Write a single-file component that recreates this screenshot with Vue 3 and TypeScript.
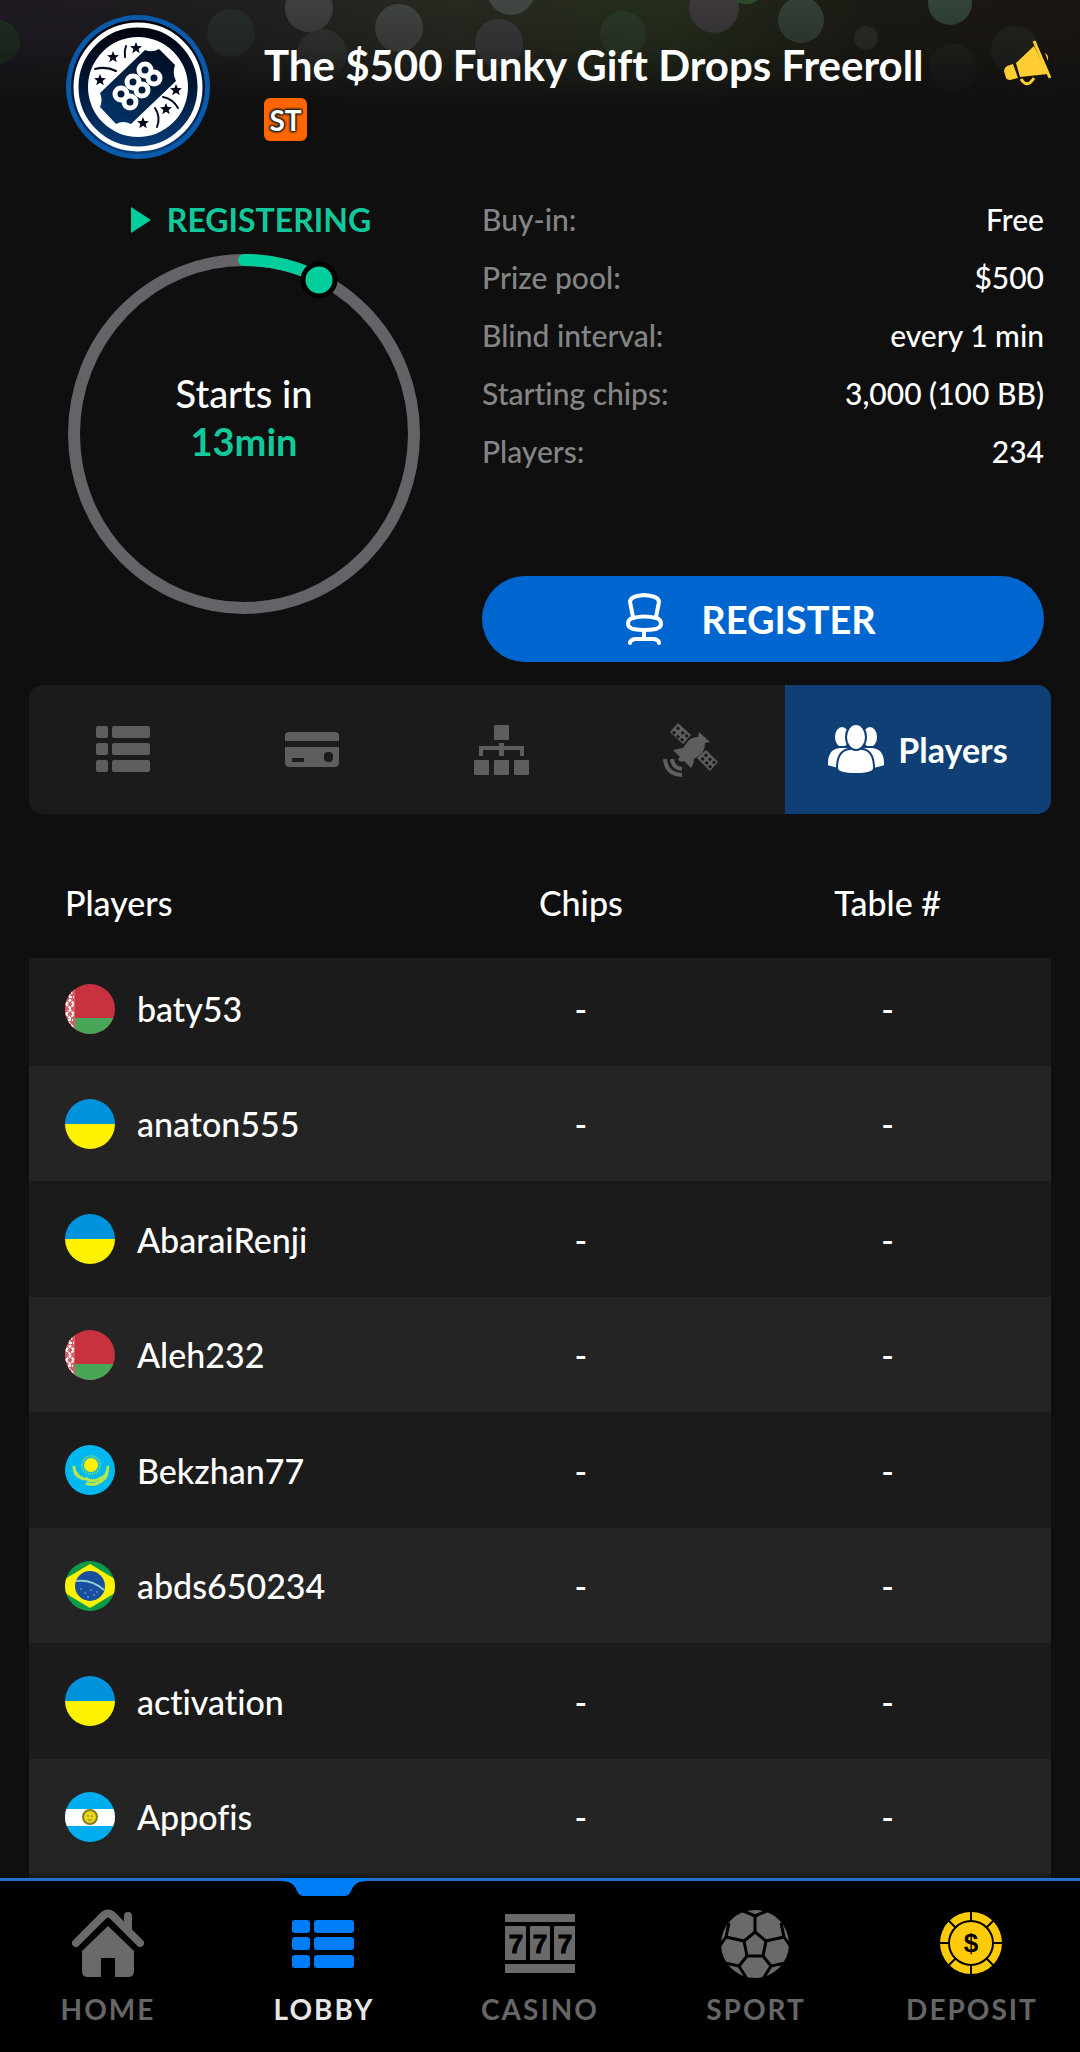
<script setup lang="ts">
import { ref } from 'vue'

type Flag = 'by' | 'ua' | 'kz' | 'br' | 'ar'

interface Player {
  name: string
  flag: Flag
  chips: string
  table: string
}

interface Detail {
  label: string
  value: string
}

const details: Detail[] = [
  { label: 'Buy-in:', value: 'Free' },
  { label: 'Prize pool:', value: '$500' },
  { label: 'Blind interval:', value: 'every 1 min' },
  { label: 'Starting chips:', value: '3,000 (100 BB)' },
  { label: 'Players:', value: '234' },
]

const players: Player[] = [
  { name: 'baty53', flag: 'by', chips: '-', table: '-' },
  { name: 'anaton555', flag: 'ua', chips: '-', table: '-' },
  { name: 'AbaraiRenji', flag: 'ua', chips: '-', table: '-' },
  { name: 'Aleh232', flag: 'by', chips: '-', table: '-' },
  { name: 'Bekzhan77', flag: 'kz', chips: '-', table: '-' },
  { name: 'abds650234', flag: 'br', chips: '-', table: '-' },
  { name: 'activation', flag: 'ua', chips: '-', table: '-' },
  { name: 'Appofis', flag: 'ar', chips: '-', table: '-' },
]

const tabs = ['Summary', 'Payouts', 'Structure', 'Satellites', 'Players']
const activeTab = ref('Players')

const navItems = ['HOME', 'LOBBY', 'CASINO', 'SPORT', 'DEPOSIT']
const activeNav = ref('LOBBY')

const bokeh = [
  { x: -2, y: 42, r: 22, c: '#1f3320', o: 0.8 },
  { x: 231, y: 33, r: 24, c: '#29342c', o: 0.7 },
  { x: 309, y: 8, r: 24, c: '#424244', o: 0.9 },
  { x: 322, y: 54, r: 25, c: '#343834', o: 0.8 },
  { x: 399, y: 28, r: 24, c: '#444844', o: 0.9 },
  { x: 499, y: 43, r: 24, c: '#3e4044', o: 0.8 },
  { x: 511, y: -9, r: 24, c: '#454a46', o: 0.9 },
  { x: 623, y: 34, r: 23, c: '#2c3c2c', o: 0.8 },
  { x: 714, y: 8, r: 25, c: '#403b40', o: 0.9 },
  { x: 746, y: -16, r: 20, c: '#2c5030', o: 0.9 },
  { x: 801, y: 20, r: 23, c: '#36433a', o: 0.9 },
  { x: 866, y: 38, r: 12, c: '#343a34', o: 0.6 },
  { x: 950, y: 3, r: 22, c: '#36493e', o: 0.9 },
  { x: 1015, y: 50, r: 24, c: '#2a302a', o: 0.5 },
  { x: 953, y: 68, r: 24, c: '#242a23', o: 0.5 },
]

const eights = [
  [55, 79], [64, 87], [67, 67], [76, 75], [79, 55], [88, 63],
]

const stars = [
  [70, 33], [47, 42], [34, 65], [110, 75], [100, 94], [77, 108],
]

const starPath =
  'M0-6 1.6-2 6-1.8 2.6 1 3.8 5.2 0 2.8-3.8 5.2-2.6 1-6-1.8-1.6-2Z'
</script>

<template>
  <div class="app">
    <svg class="backdrop" viewBox="0 0 1080 120" preserveAspectRatio="xMidYMin slice" aria-hidden="true">
      <defs>
        <linearGradient id="bdBase" x1="0" x2="1" y1="0" y2="0">
          <stop offset="0" stop-color="#1e1922" />
          <stop offset="0.2" stop-color="#201e1e" />
          <stop offset="0.4" stop-color="#282821" />
          <stop offset="0.62" stop-color="#252e1c" />
          <stop offset="0.8" stop-color="#1b1913" />
          <stop offset="1" stop-color="#1a1612" />
        </linearGradient>
        <linearGradient id="bdFade" x1="0" x2="0" y1="0" y2="1">
          <stop offset="0" stop-color="#0f0f0f" stop-opacity="0" />
          <stop offset="0.4" stop-color="#0f0f0f" stop-opacity="0.25" />
          <stop offset="0.9" stop-color="#0f0f0f" stop-opacity="1" />
        </linearGradient>
      </defs>
      <rect width="1080" height="120" fill="url(#bdBase)" />
      <circle v-for="(b, i) in bokeh" :key="i" :cx="b.x" :cy="b.y" :r="b.r" :fill="b.c" :opacity="b.o" />
      <rect width="1080" height="120" fill="url(#bdFade)" />
    </svg>

    <header class="header">
      <svg class="logo" viewBox="0 0 144 144" role="img" aria-label="Freeroll ticket">
        <defs>
          <linearGradient id="lgNavy" x1="0" x2="0" y1="0" y2="1">
            <stop offset="0" stop-color="#000208" />
            <stop offset="0.5" stop-color="#001636" />
            <stop offset="1" stop-color="#0a4180" />
          </linearGradient>
          <linearGradient id="lgTicket" x1="0.8" x2="0.2" y1="0" y2="1">
            <stop offset="0" stop-color="#000d22" />
            <stop offset="1" stop-color="#023468" />
          </linearGradient>
        </defs>
        <circle cx="72" cy="72" r="72" fill="#0a5aab" />
        <circle cx="72" cy="72" r="67" fill="url(#lgNavy)" />
        <circle cx="72" cy="72" r="62" fill="none" stroke="#fff" stroke-width="5" />
        <circle cx="72" cy="72" r="50" fill="#fff" />
        <path d="M34 78 79 35Q86 38 93 34L109 50Q106 58 110 66L65 109Q57 105 50 109L34 92Q37 85 34 78Z" fill="url(#lgTicket)" />
        <g v-for="(e, i) in eights" :key="i">
          <circle :cx="e[0]" :cy="e[1]" r="6" fill="#001a3a" stroke="#fff" stroke-width="5" />
        </g>
        <path v-for="(s, i) in stars" :key="'s' + i" :d="starPath" :transform="`translate(${s[0]} ${s[1]})`" fill="#000a1a" />
        <g fill="none" stroke="#000a1a" stroke-width="2" stroke-linecap="round">
          <path d="M60 31Q58 36 59 42M29 54Q40 51 50 56M89 93Q95 102 91 112M97 82Q107 84 112 93" />
        </g>
      </svg>
      <div class="heading">
        <h1>The $500 Funky Gift Drops Freeroll</h1>
        <span class="badge">ST</span>
      </div>
      <button class="announce" type="button" aria-label="Announcements">
        <svg viewBox="0 0 48 46">
          <g fill="#ffce32">
            <path d="M31 6 13 23 17 37 45 34Z" />
            <path d="M4 26 10 24 15 38 7 40Q4 40 3 38L1 31Q1 28 4 26Z" />
            <path d="M42 13Q46 15 45 21Z" />
          </g>
          <path d="M31 1 47 38M18 39Q24 49 31 38" fill="none" stroke="#ffce32" stroke-width="3" />
        </svg>
      </button>
    </header>

    <section class="overview">
      <div class="countdown">
        <div class="status">
          <svg viewBox="0 0 20 26" aria-hidden="true"><path d="M0 0 20 13 0 26Z" fill="#00cf9d" /></svg>
          <span>REGISTERING</span>
        </div>
        <div class="ring">
          <svg viewBox="0 0 352 362" aria-hidden="true">
            <ellipse cx="176" cy="181" rx="170" ry="174" fill="none" stroke="#656368" stroke-width="12" />
            <path d="M176 7A170 174 0 0 1 246 22" fill="none" stroke="#00cf9d" stroke-width="12" stroke-linecap="round" />
            <circle cx="251" cy="27" r="16" fill="#00cf9d" stroke="#000" stroke-width="5" />
          </svg>
          <div class="ring-text">
            <span>Starts in</span>
            <strong>13min</strong>
          </div>
        </div>
      </div>

      <div class="summary">
        <dl>
          <div v-for="d in details" :key="d.label" class="detail">
            <dt>{{ d.label }}</dt>
            <dd>{{ d.value }}</dd>
          </div>
        </dl>
        <button class="register" type="button">
          <svg viewBox="0 0 37 52" fill="none" stroke="#fff" stroke-width="4" stroke-linecap="round" stroke-linejoin="round" aria-hidden="true">
            <path d="M7 24 4 9Q4 3 18 2 33 3 33 9L30 24" />
            <path d="M7 25Q18 22 30 25 35 26 35 31 35 34 30 36 18 38 7 36 2 34 2 31 2 26 7 25Z" />
            <path d="M18 38V46M4 50Q4 47 9 46H28Q33 47 33 50" />
          </svg>
          <span>REGISTER</span>
        </button>
      </div>
    </section>

    <div class="tabs" role="tablist">
      <button
        v-for="t in tabs"
        :key="t"
        class="tab"
        :class="{ active: activeTab === t }"
        type="button"
        role="tab"
        :aria-label="t"
        :aria-selected="activeTab === t"
        @click="activeTab = t"
      >
        <svg v-if="t === 'Summary'" viewBox="0 0 56 54" fill="#5e5e5e">
          <g v-for="y in [3, 20, 37]" :key="y">
            <rect x="0" :y="y" width="12" height="12" rx="2" />
            <rect x="16" :y="y" width="38" height="12" rx="2" />
          </g>
        </svg>
        <svg v-else-if="t === 'Payouts'" viewBox="0 0 56 54">
          <path d="M0 18V13Q0 9 4 9H50Q54 9 54 13V18Z" fill="#5e5e5e" />
          <path d="M0 24H54V39Q54 44 50 44H4Q0 44 0 39Z" fill="#5e5e5e" />
          <rect x="7" y="35" width="12" height="4" fill="#1b1b1b" />
          <rect x="39" y="29" width="9" height="10" rx="4" fill="#1b1b1b" />
        </svg>
        <svg v-else-if="t === 'Structure'" viewBox="0 0 56 54" fill="#5e5e5e">
          <rect x="20" y="2" width="15" height="15" rx="1" />
          <path d="M25 20H30V23H50V33H46V27H30V33H25V27H9V33H5V23H25Z" />
          <rect x="0" y="37" width="15" height="15" rx="1" />
          <rect x="20" y="37" width="15" height="15" rx="1" />
          <rect x="40" y="37" width="15" height="15" rx="1" />
        </svg>
        <svg v-else-if="t === 'Satellites'" viewBox="0 0 56 54">
          <g fill="#5e5e5e">
            <path d="M15 0 28 12 20 21 7 9Z" />
            <path d="M43 27 55 39 47 48 34 35Z" />
            <path d="M36 9 47 19 42 20Q42 28 37 32L31 36Q31 41 28 45L21 38Q17 40 15 36L17 34 10 27Q14 26 20 25L25 18Q29 14 35 14Z" />
          </g>
          <g fill="#1b1b1b">
            <rect x="13" y="4" width="3" height="3" transform="rotate(43 15 6)" />
            <rect x="18" y="8" width="3" height="3" transform="rotate(43 19 10)" />
            <rect x="22" y="11" width="3" height="3" transform="rotate(43 23 13)" />
            <rect x="10" y="8" width="3" height="3" transform="rotate(43 11 9)" />
            <rect x="14" y="12" width="3" height="3" transform="rotate(43 15 13)" />
            <rect x="18" y="15" width="3" height="3" transform="rotate(43 19 16)" />
            <rect x="41" y="31" width="3" height="3" transform="rotate(43 43 33)" />
            <rect x="45" y="35" width="3" height="3" transform="rotate(43 47 37)" />
            <rect x="49" y="38" width="3" height="3" transform="rotate(43 51 40)" />
            <rect x="38" y="34" width="3" height="3" transform="rotate(43 39 36)" />
            <rect x="42" y="38" width="3" height="3" transform="rotate(43 43 40)" />
            <rect x="46" y="42" width="3" height="3" transform="rotate(43 47 43)" />
          </g>
          <path d="M2 36Q3 51 19 52M9 36Q10 45 19 46" fill="none" stroke="#5e5e5e" stroke-width="4" />
        </svg>
        <template v-else>
          <svg viewBox="0 0 56 54" fill="#fff" stroke="#0f3f74" stroke-width="2">
            <ellipse cx="14" cy="14" rx="8" ry="11" />
            <ellipse cx="42" cy="14" rx="8" ry="11" />
            <path d="M-1 43Q-2 25 12 24H44Q58 25 57 43L46 46H10Z" />
            <path d="M27 26H29Q46 24 46 45 46 51 28 51 9 51 9 45 9 24 27 26Z" />
            <ellipse cx="28" cy="14" rx="10" ry="13" />
          </svg>
          <span>Players</span>
        </template>
      </button>
    </div>

    <div class="list">
      <table>
        <thead>
          <tr>
            <th class="col-name" scope="col">Players</th>
            <th class="col-chips" scope="col">Chips</th>
            <th class="col-table" scope="col">Table #</th>
          </tr>
        </thead>
        <tbody>
          <tr v-for="p in players" :key="p.name">
            <td class="col-name">
              <div class="player">
                <svg class="flag" viewBox="0 0 50 50" aria-hidden="true">
                  <template v-if="p.flag === 'by'">
                    <rect width="50" height="50" fill="#c8313e" />
                    <rect y="34" width="50" height="16" fill="#4aa657" />
                    <rect width="10" height="50" fill="#d4606a" />
                    <path d="M1 20 5 16 9 20 5 24ZM1 30 5 26 9 30 5 34ZM3 12 7 8M3 38 8 43M4 13 9 13M3 36 8 36" fill="none" stroke="#fff" stroke-width="2" stroke-dasharray="3 1" />
                  </template>
                  <template v-else-if="p.flag === 'ua'">
                    <rect width="50" height="26" fill="#0093dd" />
                    <rect y="25" width="50" height="25" fill="#fff200" />
                  </template>
                  <template v-else-if="p.flag === 'kz'">
                    <rect width="50" height="50" fill="#00b8f0" />
                    <circle cx="26" cy="20" r="9" fill="none" stroke="#8fdc60" stroke-width="2" stroke-dasharray="1 1" />
                    <circle cx="26" cy="20" r="7" fill="#fff200" />
                    <path d="M9 21Q9 32 18 33M43 21Q43 32 34 34 26 38 20 33M11 27Q14 34 20 34M21 38Q26 41 33 38 42 34 42 27" fill="none" stroke="#b5e64a" stroke-width="3" />
                  </template>
                  <template v-else-if="p.flag === 'br'">
                    <rect width="50" height="50" fill="#0f9a48" />
                    <path d="M25 3 50 18V32L25 47 0 32V18Z" fill="#fff200" />
                    <circle cx="25" cy="25" r="15" fill="#1a4f9f" />
                    <path d="M11 20Q27 18 39 29" fill="none" stroke="#8fd0d8" stroke-width="2" />
                    <path d="M15 28H17M19 32H21M25 29H27M28 34H30M22 36H24M31 31H33" stroke="#7fb0d8" stroke-width="1" />
                  </template>
                  <template v-else>
                    <rect width="50" height="50" fill="#00adef" />
                    <rect y="17" width="50" height="17" fill="#fff" />
                    <circle cx="25" cy="25" r="7" fill="#e8d81c" stroke="#8a7a22" stroke-width="2" />
                    <path d="M22 24H24M26 24H28M23 28H27" stroke="#8a7a22" stroke-width="1" />
                  </template>
                </svg>
                <span>{{ p.name }}</span>
              </div>
            </td>
            <td class="col-chips">{{ p.chips }}</td>
            <td class="col-table">{{ p.table }}</td>
          </tr>
        </tbody>
      </table>
    </div>

    <nav class="nav">
      <a
        v-for="n in navItems"
        :key="n"
        href="#"
        :class="{ active: activeNav === n }"
        @click.prevent="activeNav = n"
      >
        <svg v-if="activeNav === n" class="marker" viewBox="0 0 84 18" aria-hidden="true">
          <path d="M0 0H84V3Q75 3 71 9L68 15Q66 18 63 18H21Q18 18 16 15L13 9Q9 3 0 3Z" fill="#007ef9" />
        </svg>
        <svg v-if="n === 'HOME'" class="icon" viewBox="0 0 72 70">
          <path d="M4 34 32 6Q36 3 40 6L68 34M56 7V21" fill="none" stroke="#6a6a6a" stroke-width="8" stroke-linecap="round" stroke-linejoin="round" />
          <path d="M36 17 62 42V62Q62 68 56 68H43V49H29V68H16Q10 68 10 62V42Z" fill="#6a6a6a" />
        </svg>
        <svg v-else-if="n === 'LOBBY'" class="icon" viewBox="0 0 72 70" fill="#007ef9">
          <g v-for="y in [11, 28, 46]" :key="y">
            <rect x="4" :y="y" width="18" height="13" rx="3" />
            <rect x="26" :y="y" width="40" height="13" rx="3" />
          </g>
        </svg>
        <svg v-else-if="n === 'CASINO'" class="icon" viewBox="0 0 72 70">
          <g fill="#6a6a6a">
            <rect x="1" y="5" width="70" height="8" />
            <rect x="1" y="17" width="21" height="34" />
            <rect x="26" y="17" width="20" height="34" />
            <rect x="50" y="17" width="21" height="34" />
            <rect x="1" y="55" width="70" height="9" />
          </g>
          <g class="reels" fill="#000" stroke="#000" stroke-width="1">
            <text x="12" y="44">7</text>
            <text x="36" y="44">7</text>
            <text x="61" y="44">7</text>
          </g>
        </svg>
        <svg v-else-if="n === 'SPORT'" class="icon" viewBox="0 0 72 70">
          <circle cx="35" cy="35" r="34" fill="#6a6a6a" />
          <g fill="none" stroke="#000" stroke-width="3">
            <path d="M35 23 46 32 43 47H27L24 32Z" />
            <path d="M35 23V7M21 1 35 7 49 1M46 32 64 28M61 14 64 28 71 38M24 32 6 28M9 14 6 28 -1 38M43 47 51 57M65 54 51 57 43 70M27 47 19 57M5 54 19 57 27 70" />
          </g>
        </svg>
        <svg v-else class="icon" viewBox="0 0 72 70">
          <circle cx="35" cy="34" r="31" fill="#ffcb08" />
          <circle cx="35" cy="34" r="22" fill="none" stroke="#000" stroke-width="2" />
          <path d="M35 2V12M35 56V66M3 34H13M57 34H67M12 11 20 19M50 49 58 57M58 11 50 19M20 49 12 57" stroke="#000" stroke-width="2" />
          <text class="coin" x="35" y="43">$</text>
        </svg>
        <span>{{ n }}</span>
      </a>
    </nav>
  </div>
</template>

<style>
body {
  margin: 0;
  background: #0f0f0f;
}
</style>

<style scoped>
.app {
  position: relative;
  display: flex;
  flex-direction: column;
  height: 100vh;
  overflow: hidden;
  background: #0f0f0f;
  color: #fff;
  font-family: Lato, 'Liberation Sans', sans-serif;
  font-size: 34px;
  font-weight: 500;
  font-variant-ligatures: none;
}

button {
  border: 0;
  padding: 0;
  background: none;
  color: inherit;
  font: inherit;
  cursor: pointer;
}

svg {
  display: block;
  flex: none;
}

.backdrop {
  position: absolute;
  top: 0;
  left: 0;
  width: 100%;
  height: 120px;
}

.header {
  position: relative;
  display: flex;
  align-items: flex-start;
  padding: 15px 29px 31px 66px;
}

.logo {
  width: 144px;
  height: 144px;
}

.heading {
  flex: 1;
  padding: 20px 0 0 54px;
}

h1 {
  margin: 0;
  font-size: 42px;
  line-height: 60px;
  font-weight: 700;
}

.badge {
  display: flex;
  align-items: center;
  justify-content: center;
  width: 43px;
  height: 43px;
  margin-top: 3px;
  border-radius: 6px;
  background: #ff6600;
  font-size: 28px;
  font-weight: 700;
  text-shadow: 1px 1px 2px #222, -1px -1px 2px #222, 1px -1px 2px #222, -1px 1px 2px #222, 0 0 3px #222;
}

.announce {
  margin-top: 25px;
}

.announce svg {
  width: 48px;
  height: 46px;
}

.overview {
  display: flex;
  gap: 62px;
  padding: 0 36px 0 68px;
}

.countdown {
  padding-top: 9px;
}

.status {
  display: flex;
  align-items: center;
  justify-content: center;
  gap: 16px;
  padding-left: 14px;
  color: #12c99b;
  font-size: 32px;
  font-weight: 700;
  line-height: 42px;
}

.status svg {
  width: 20px;
  height: 26px;
}

.ring {
  position: relative;
  margin-top: 12px;
}

.ring > svg {
  width: 352px;
  height: 362px;
}

.ring-text {
  position: absolute;
  inset: 0 0 35px;
  display: flex;
  flex-direction: column;
  align-items: center;
  justify-content: center;
  font-size: 38px;
  line-height: 48px;
}

.ring-text strong {
  color: #12c99b;
}

.summary {
  flex: 1;
  display: flex;
  flex-direction: column;
  justify-content: space-between;
  height: 472px;
}

dl {
  margin: 0;
  font-size: 30px;
}

.detail {
  display: flex;
  justify-content: space-between;
  line-height: 58px;
}

dt {
  color: #858585;
}

dd {
  margin: 0;
}

.register {
  display: flex;
  align-items: center;
  justify-content: center;
  gap: 38px;
  height: 86px;
  padding-right: 24px;
  border-radius: 43px;
  background: #0066cf;
  font-size: 38px;
  font-weight: 700;
}

.register svg {
  width: 37px;
  height: 52px;
}

.tabs {
  display: grid;
  grid-template-columns: repeat(4, 1fr) 266px;
  height: 129px;
  margin: 23px 29px 32px;
  border-radius: 14px;
  overflow: hidden;
  background: #1b1b1b;
  flex: none;
}

.tab {
  display: flex;
  align-items: center;
  justify-content: center;
  gap: 14px;
  font-weight: 700;
}

.tab.active {
  background: #0f3f74;
}

.tab svg {
  width: 56px;
  height: 54px;
}

.list {
  flex: 1;
  min-height: 0;
  margin: 0 29px;
  overflow-y: auto;
  scrollbar-width: none;
  background: #1b1b1b;
}

table {
  width: 100%;
  table-layout: fixed;
  border-collapse: collapse;
  text-align: center;
}

th {
  height: 112px;
  padding: 0;
  background: #0f0f0f;
  font-weight: 500;
}

td {
  height: 115px;
  padding: 0;
}

tr:nth-child(odd) td {
  height: 116px;
}

tr:first-child td {
  height: 101px;
  padding-bottom: 7px;
}

tr:nth-child(even) td {
  background: #242424;
}

.col-name {
  width: 39%;
  padding-left: 36px;
  box-sizing: border-box;
  text-align: left;
}

.col-chips {
  width: 30%;
}

.col-table {
  width: 31%;
  padding-right: 10px;
  box-sizing: border-box;
}

.player {
  display: flex;
  align-items: center;
  gap: 22px;
}

.flag {
  width: 50px;
  height: 50px;
  border-radius: 50%;
}

.nav {
  display: grid;
  grid-template-columns: repeat(5, 1fr);
  flex: none;
  height: 171px;
  border-top: 3px solid #1f72cf;
  background: #000;
}

.nav a {
  position: relative;
  display: flex;
  flex-direction: column;
  align-items: center;
  padding-top: 28px;
  color: #666;
  font-size: 28px;
  font-weight: 700;
  line-height: 36px;
  letter-spacing: 2px;
  text-decoration: none;
}

.nav a.active {
  color: #e6e6e6;
}

.marker {
  position: absolute;
  top: -3px;
  width: 84px;
  height: 18px;
}

.icon {
  width: 72px;
  height: 70px;
  margin-bottom: 12px;
}

.reels,
.coin {
  font-family: 'Liberation Sans', sans-serif;
  font-size: 26px;
  font-weight: 700;
  letter-spacing: 0;
  text-anchor: middle;
}
</style>
